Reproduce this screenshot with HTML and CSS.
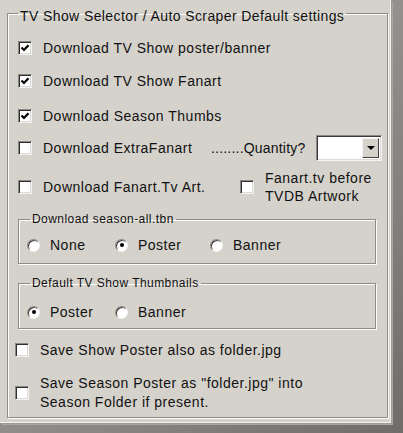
FILE: index.html
```html
<!DOCTYPE html>
<html>
<head>
<meta charset="utf-8">
<link rel="stylesheet" href="styles.css">
</head>
<body>
<div class="frame">
  <div class="window">
    <fieldset class="group outer">
      <legend class="title">TV Show Selector / Auto Scraper Default settings</legend>

      <div class="row r1">
        <span class="cb"><svg viewBox="0 0 12 12" width="12" height="12"><path d="M2.5 5.5 L5 8 L9.5 3.2" fill="none" stroke="#000" stroke-width="2.2"/></svg></span>
        <span class="lbl">Download TV Show poster/banner</span>
      </div>
      <div class="row r2">
        <span class="cb"><svg viewBox="0 0 12 12" width="12" height="12"><path d="M2.5 5.5 L5 8 L9.5 3.2" fill="none" stroke="#000" stroke-width="2.2"/></svg></span>
        <span class="lbl">Download TV Show Fanart</span>
      </div>
      <div class="row r3">
        <span class="cb"><svg viewBox="0 0 12 12" width="12" height="12"><path d="M2.5 5.5 L5 8 L9.5 3.2" fill="none" stroke="#000" stroke-width="2.2"/></svg></span>
        <span class="lbl">Download Season Thumbs</span>
      </div>
      <div class="row r4">
        <span class="cb"></span>
        <span class="lbl w-extra">Download ExtraFanart</span>
        <span class="qty">........Quantity?</span>
        <span class="combo"><span class="field"></span><span class="btn"><span class="arrow"></span></span></span>
      </div>
      <div class="row r5">
        <span class="cb"></span>
        <span class="lbl w-fanart">Download Fanart.Tv Art.</span>
        <span class="cb"></span>
        <span class="lbl two">Fanart.tv before<br>TVDB Artwork</span>
      </div>

      <fieldset class="group inner g1">
        <legend class="sub">Download season-all.tbn</legend>
        <div class="radios">
          <span class="opt o1"><span class="rb"></span><span class="lbl">None</span></span>
          <span class="opt o2"><span class="rb on"></span><span class="lbl">Poster</span></span>
          <span class="opt"><span class="rb"></span><span class="lbl">Banner</span></span>
        </div>
      </fieldset>

      <fieldset class="group inner g2">
        <legend class="sub">Default TV Show Thumbnails</legend>
        <div class="radios">
          <span class="opt o1"><span class="rb on"></span><span class="lbl">Poster</span></span>
          <span class="opt o2"><span class="rb"></span><span class="lbl">Banner</span></span>
        </div>
      </fieldset>

      <div class="row save s1">
        <span class="cb"></span>
        <span class="lbl">Save Show Poster also as folder.jpg</span>
      </div>
      <div class="row save s2">
        <span class="cb"></span>
        <span class="lbl two">Save Season Poster as "folder.jpg" into<br>Season Folder if present.</span>
      </div>
    </fieldset>
  </div>
</div>
</body>
</html>
```

FILE: styles.css
```css
html, body {
  margin: 0;
  padding: 0;
  background: #7d7c7a;
}
.frame {
  width: 403px;
  height: 433px;
  background: linear-gradient(135deg, #b4b2ae 0%, #8a8986 60%, #6e6d6b 100%);
  font-family: "Liberation Sans", Arial, sans-serif;
  font-size: 14px;
  letter-spacing: 0.5px;
  color: #111;
}
.window {
  width: 391px;
  height: 423px;
  background: #d5d2cc;
  border-right: 1px solid #f2f1ee;
  border-bottom: 1px solid #f2f1ee;
  box-shadow: 1px 1px 0 #9c9a96, 2px 2px 0 #a8a6a2;
  padding-top: 2px;
  box-sizing: border-box;
  overflow: hidden;
}
.group {
  border: 1px solid #8f8c87;
  box-shadow: inset 1px 1px 0 #fbfbfa, 1px 1px 0 #fbfbfa;
  margin: 0;
  padding: 0;
  min-width: 0;
}
.outer {
  margin-left: 7px;
  width: 381px;
  box-sizing: border-box;
  padding: 0 0 5px 10px;
}
.title {
  margin-left: 0;
  padding: 6px 2px 0 2px;
  line-height: 17px;
  font-size: 14px;
  letter-spacing: 0.4px;
}
.row {
  display: flex;
  align-items: center;
  height: 30px;
}
.r1 { margin-top: 8px; }
.r2 { margin-top: 3px; }
.r3 { margin-top: 5px; }
.r4 { margin-top: 3px; height: 28px; }
.r5 { margin-top: 6px; height: 38px; }
.cb {
  flex: none;
  width: 12px;
  height: 12px;
  background: #fff;
  border: 1px solid;
  border-color: #8a8884 #f4f3f1 #f4f3f1 #8a8884;
  box-shadow: inset 1px 1px 0 #2e2e2e, inset -1px -1px 0 #dcdad5;
  display: flex;
  align-items: center;
  justify-content: center;
  margin-right: 11px;
}
.cb svg { display: block; }
.lbl { white-space: nowrap; }
.two { line-height: 18px; }
.w-extra { width: 168px; }
.w-fanart { width: 197px; }
.qty { width: 95px; letter-spacing: 0.2px; }
.combo {
  margin-left: 10px;
  width: 66px;
  height: 26px;
  box-sizing: border-box;
  display: flex;
  border: 1px solid;
  border-color: #8a8884 #f4f3f1 #f4f3f1 #8a8884;
  box-shadow: inset 1px 1px 0 #3a3a3a, inset -1px -1px 0 #dcdad5;
  background: #fff;
  padding: 2px;
}
.field { flex: 1; }
.btn {
  width: 17px;
  background: #d5d2cc;
  box-sizing: border-box;
  border: 1px solid;
  border-color: #f4f3f1 #404040 #404040 #f4f3f1;
  display: flex;
  align-items: center;
  justify-content: center;
}
.arrow {
  width: 0;
  height: 0;
  border-left: 4px solid transparent;
  border-right: 4px solid transparent;
  border-top: 4px solid #000;
}
.inner {
  width: 358px;
  box-sizing: border-box;
  padding: 0 0 0 8px;
}
.g1 { margin-top: 6px; padding-top: 7px; padding-bottom: 6px; }
.g2 { margin-top: 12px; padding-top: 10px; padding-bottom: 4px; }
.sub {
  margin-left: 3px;
  padding: 0 2px;
  font-size: 12px;
  line-height: 14px;
  letter-spacing: 0.45px;
}
.radios {
  display: flex;
  align-items: center;
  height: 24px;
}
.opt {
  display: flex;
  align-items: center;
}
.o1 { width: 88px; }
.o2 { width: 95px; }
.rb {
  flex: none;
  width: 11px;
  height: 11px;
  border-radius: 50%;
  background: #fff;
  border: 1px solid;
  border-color: #8a8884 #f4f3f1 #f4f3f1 #8a8884;
  box-shadow: inset 1px 1px 0 #3a3a3a;
  margin-right: 10px;
  display: flex;
  align-items: center;
  justify-content: center;
}
.rb.on::after {
  content: "";
  width: 4px;
  height: 4px;
  border-radius: 50%;
  background: #000;
}
.save { margin-left: -3px; }
.save .cb { margin-right: 11px; }
.s1 { margin-top: 9px; height: 24px; }
.s2 { margin-top: 12px; height: 38px; }
.s2 .lbl { line-height: 19px; }
```
